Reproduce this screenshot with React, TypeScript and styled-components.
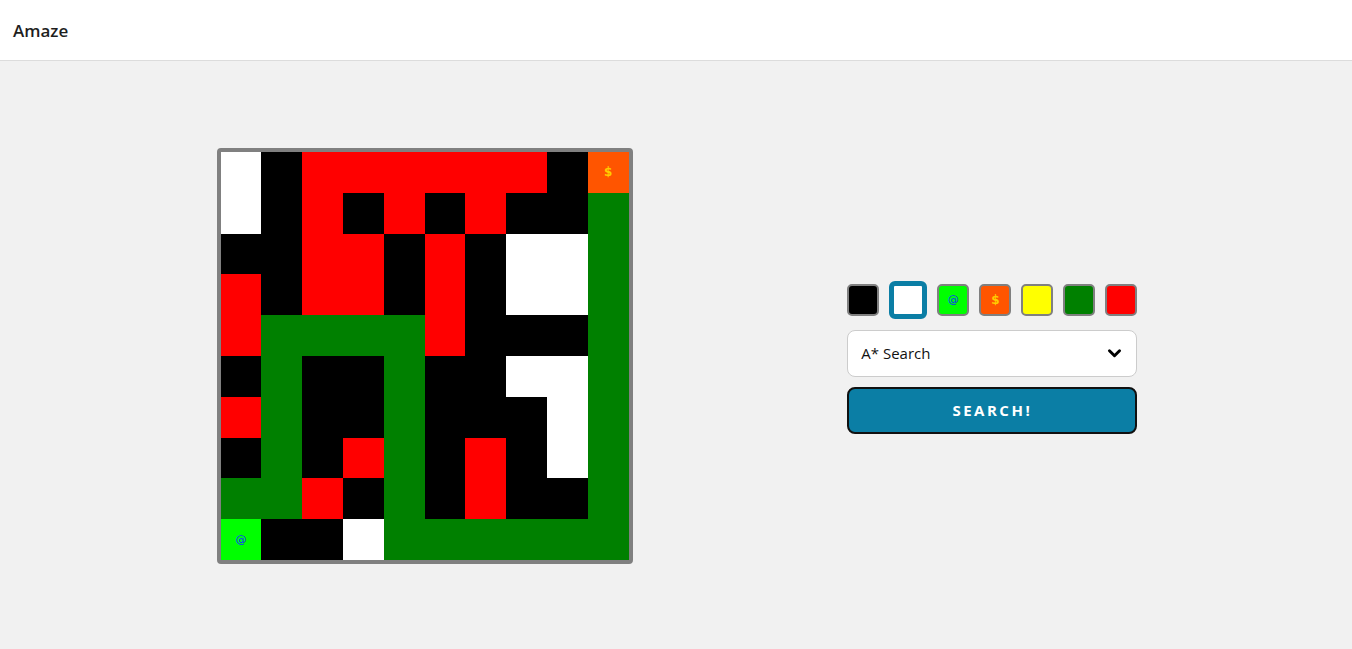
import React, { useState } from "react";
import styled, { createGlobalStyle } from "styled-components";

const GlobalStyle = createGlobalStyle`
  html, body {
    margin: 0;
    padding: 0;
    background: #f1f1f1;
    font-family: "Open Sans", "Noto Sans", sans-serif;
  }
  * { box-sizing: border-box; }
`;

const COLORS: Record<string, string> = {
  W: "#000000",
  E: "#ffffff",
  S: "#00ff00",
  G: "#ff5500",
  Y: "#ffff00",
  P: "#008000",
  V: "#ff0000",
};

const MAZE = [
  "EWVVVVVVWG",
  "EWVWVWVWWP",
  "WWVVWVWEEP",
  "VWVVWVWEEP",
  "VPPPPVWWWP",
  "WPWWPWWEEP",
  "VPWWPWWWEP",
  "WPWVPWVWEP",
  "PPVWPWVWWP",
  "SWWEPPPPPP",
];

const PALETTE = ["W", "E", "S", "G", "Y", "P", "V"];

const Header = styled.header`
  height: 61px;
  background: #ffffff;
  border-bottom: 1px solid #dcdcdc;
  display: flex;
  align-items: center;
  padding-left: 13px;
`;

const Title = styled.span`
  font-size: 17px;
  font-weight: 600;
  color: #1e1e1e;
`;

const Main = styled.main`
  height: calc(100vh - 61px);
  display: flex;
  align-items: center;
  justify-content: space-evenly;
  padding-top: 2px;
`;

const Board = styled.div`
  display: grid;
  grid-template-columns: repeat(10, 40.8px);
  grid-template-rows: repeat(10, 40.8px);
  border: 4px solid #808080;
  border-radius: 4px;
  background: #808080;
  margin-left: 2px;
`;

const Cell = styled.div<{ $bg: string }>`
  background: ${(p) => p.$bg};
  display: flex;
  align-items: center;
  justify-content: center;
`;

const Mark = styled.span<{ $kind: string }>`
  font-family: "DejaVu Sans", sans-serif;
  font-size: ${(p) => (p.$kind === "G" ? "12px" : "11px")};
  font-weight: ${(p) => (p.$kind === "G" ? 700 : 400)};
  color: ${(p) => (p.$kind === "G" ? "#ffcc00" : "#1030ff")};
`;

const Panel = styled.div`
  width: 290px;
  display: flex;
  flex-direction: column;
  gap: 10px;
  margin-top: 2px;
`;

const Swatches = styled.div`
  display: flex;
  align-items: center;
  justify-content: space-between;
  height: 38px;
  margin-bottom: 1px;
`;

const Swatch = styled.button<{ $bg: string; $active: boolean }>`
  width: ${(p) => (p.$active ? "38px" : "32px")};
  height: ${(p) => (p.$active ? "38px" : "32px")};
  padding: 0;
  background: ${(p) => p.$bg};
  border: ${(p) => (p.$active ? "5px solid #0b7ea5" : "2px solid #808080")};
  border-radius: ${(p) => (p.$active ? "6px" : "5px")};
  display: flex;
  align-items: center;
  justify-content: center;
  cursor: pointer;
`;

const SelectBox = styled.div`
  height: 47px;
  background: #ffffff;
  border: 1px solid #cccccc;
  border-radius: 8px;
  display: flex;
  align-items: center;
  justify-content: space-between;
  padding: 0 14px 0 13px;
  font-size: 15px;
  color: #111;
`;

const SearchButton = styled.button`
  height: 47px;
  background: #0b7ea5;
  border: 2px solid #111111;
  border-radius: 8px;
  color: #ffffff;
  font-family: "Open Sans", "Noto Sans", sans-serif;
  font-size: 15px;
  font-weight: 700;
  letter-spacing: 2.5px;
  cursor: pointer;
`;

const Chevron = () => (
  <svg width="15" height="11" viewBox="0 0 16 12">
    <path d="M2.5 3 L8 8.5 L13.5 3" fill="none" stroke="#000" strokeWidth="3.2" strokeLinecap="round" strokeLinejoin="round" />
  </svg>
);

const markFor = (k: string) => (k === "S" ? "@" : k === "G" ? "$" : "");

const App = () => {
  const [active, setActive] = useState("E");

  return (
    <>
      <GlobalStyle />
      <Header>
        <Title>Amaze</Title>
      </Header>
      <Main>
        <Board>
          {MAZE.map((row, r) =>
            row.split("").map((k, c) => (
              <Cell key={`${r}-${c}`} $bg={COLORS[k]}>
                {markFor(k) && <Mark $kind={k}>{markFor(k)}</Mark>}
              </Cell>
            ))
          )}
        </Board>
        <Panel>
          <Swatches>
            {PALETTE.map((k) => (
              <Swatch key={k} $bg={COLORS[k]} $active={active === k} onClick={() => setActive(k)}>
                {markFor(k) && <Mark $kind={k}>{markFor(k)}</Mark>}
              </Swatch>
            ))}
          </Swatches>
          <SelectBox>
            <span>A* Search</span>
            <Chevron />
          </SelectBox>
          <SearchButton>SEARCH!</SearchButton>
        </Panel>
      </Main>
    </>
  );
};

export default App;
